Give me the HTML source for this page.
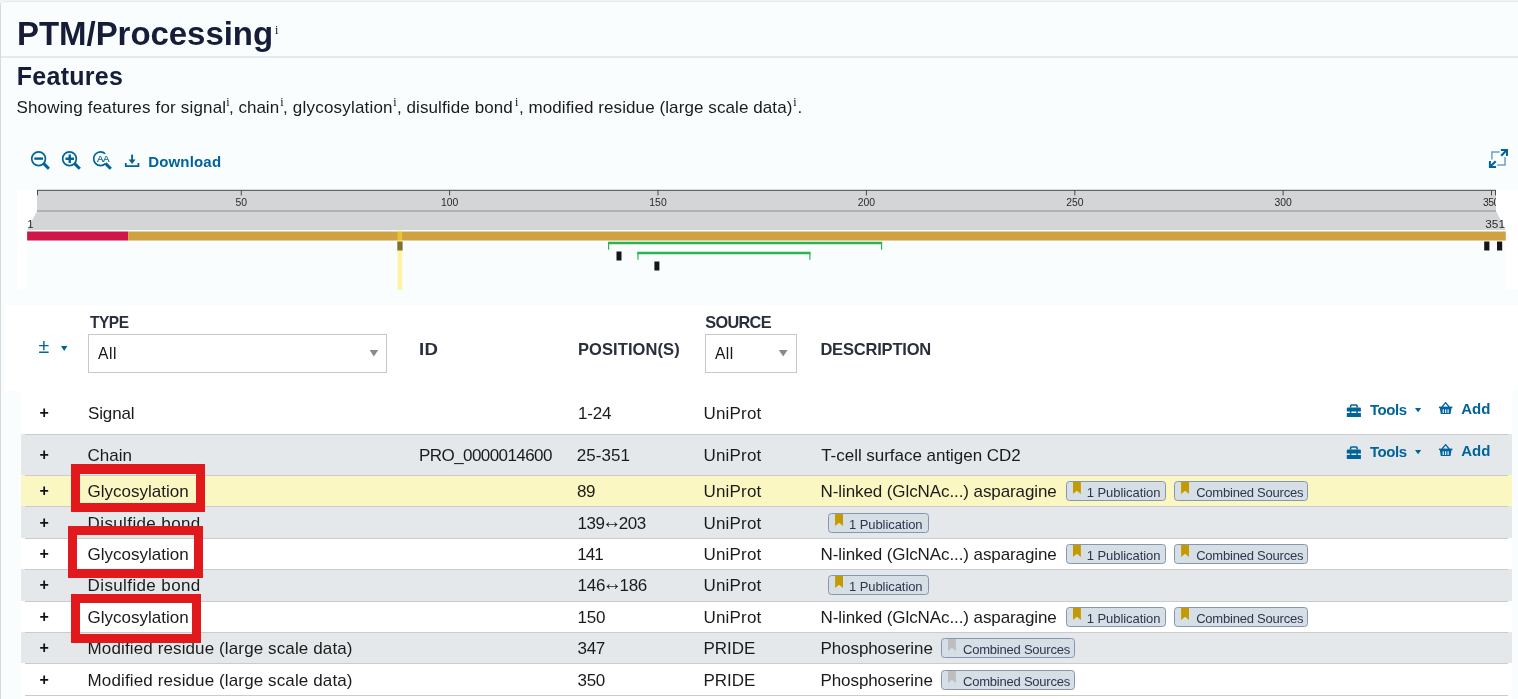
<!DOCTYPE html>
<html lang="en">
<head>
<meta charset="utf-8">
<title>PTM/Processing</title>
<style>
html,body{margin:0;padding:0;}
body{width:1518px;height:699px;overflow:hidden;background:#fafdfe;font-family:"Liberation Sans",sans-serif;color:#1b1b1b;}
#card{will-change:transform;position:absolute;left:0;top:0;width:1518px;height:699px;overflow:hidden;background:#fafdfe;}
#card>*{position:absolute;}
.t{position:absolute;white-space:pre;line-height:1;margin:0;}
.edge-top{left:0;top:0;width:1518px;height:1px;background:#f1f4f6;}
.frame{left:0;top:1px;width:1540px;height:720px;box-sizing:border-box;border-top:1px solid #e8ebee;border-left:1px solid #d6d9de;border-top-left-radius:4px;}
h1.t{font-size:33px;font-weight:700;color:#161d39;}
h2.t{font-size:25px;font-weight:700;color:#161d39;}
.hr{left:1px;top:56px;width:1517px;height:1.5px;background:#e4e9ed;}
.sub{font-size:17px;color:#1b1b1b;}
.sup{font-family:"Liberation Serif",serif;font-size:12px;color:#111;}
.blue{color:#00639a;}
.b{font-weight:700;}
.white{background:#fff;}
.th{font-size:16.5px;font-weight:700;color:#2a2f3c;}
.cell{font-size:17px;color:#1b1b1b;}
.arr{font-size:19.5px;line-height:0;margin:0 -2.6px 0 -2.7px;vertical-align:1px;letter-spacing:0;}
.plus{font-size:16px;font-weight:700;color:#111;}
.row{left:21px;width:1491px;}
.row i{position:absolute;left:4px;right:4px;top:0;height:1px;background:#c9cbce;}
.even{background:#e4e8eb;}
.hl{background:#fbf7c3;}
.sel{border:1px solid #c8c8c8;background:#fff;box-sizing:border-box;}
.tag{position:absolute;box-sizing:border-box;height:19.5px;border:1px solid #8696ae;border-radius:3.5px;background:#d6dee6;}
.tag b{position:absolute;left:5.9px;top:0;width:8px;height:12px;background:#c39b00;clip-path:polygon(0 0,100% 0,100% 100%,50% 72%,0 100%);}
.tag.g b{background:#bdbdbd;}
.tag span{position:absolute;left:21px;top:4.3px;font-size:13px;line-height:1;color:#2e364e;white-space:pre;}
.redbox{position:absolute;box-sizing:border-box;border:9px solid #e2191c;}
</style>
</head>
<body>
<div id="card">
  <div class="edge-top"></div><div class="frame"></div>

  <h1 class="t" style="left:17px;top:17px;letter-spacing:-0.05px;">PTM/Processing</h1>
  <span class="t sup" style="left:274.9px;top:24.2px;">i</span>
  <div class="hr"></div>
  <h2 class="t" style="left:16.8px;top:64px;letter-spacing:0.27px;">Features</h2>

  <p class="t sub" style="left:0;top:99px;width:820px;height:18px;"><span class="t" style="left:16.4px;letter-spacing:0.18px">Showing features for signal</span><span class="t sup" style="left:226.2px;top:-2.6px">i</span><span class="t" style="left:229px;letter-spacing:0px">, chain</span><span class="t sup" style="left:280.2px;top:-2.6px">i</span><span class="t" style="left:283px;letter-spacing:0.2px">, glycosylation</span><span class="t sup" style="left:393.3px;top:-2.6px">i</span><span class="t" style="left:396.9px;letter-spacing:0.1px">, disulfide bond</span><span class="t sup" style="left:515px;top:-2.6px">i</span><span class="t" style="left:518.9px;letter-spacing:0.09px">, modified residue (large scale data)</span><span class="t sup" style="left:793.3px;top:-2.6px">i</span><span class="t" style="left:797.6px">.</span></p>

  <!-- toolbar -->
  <svg style="left:28px;top:148px" width="24" height="24" viewBox="28 148 24 24" fill="none" stroke="#00639a">
    <circle cx="38.6" cy="158.75" r="6.85" stroke-width="1.7"/>
    <path d="M43.5 163.4L48.9 168.8" stroke-width="3"/>
    <path d="M34.3 158.6H43" stroke-width="2.4"/>
  </svg>
  <svg style="left:59px;top:148px" width="24" height="24" viewBox="59 148 24 24" fill="none" stroke="#00639a">
    <circle cx="69.5" cy="158.75" r="6.85" stroke-width="1.7"/>
    <path d="M74.4 163.4L79.8 168.8" stroke-width="3"/>
    <path d="M65.5 158.75H74M69.75 154.5V163" stroke-width="2.4"/>
  </svg>
  <svg style="left:90px;top:148px" width="26" height="24" viewBox="90 148 26 24" fill="none" stroke="#00639a">
    <path d="M105.35 163.6A6.85 6.85 0 1 1 105.2 153.75" stroke-width="1.7"/>
    <path d="M105.4 163.4L110.8 168.8" stroke-width="3"/>
    <text x="97" y="161.8" font-family="Liberation Sans, sans-serif" font-size="9.8" letter-spacing="-0.45" fill="#00639a" stroke="#00639a" stroke-width="0.2">AA</text>
  </svg>
  <svg style="left:123px;top:152px" width="18" height="17" viewBox="123 152 18 17" fill="none" stroke="#00639a">
    <path d="M132.1 154.6V160" stroke-width="1.9"/>
    <path d="M128.6 159.4H135.6L132.1 163.9Z" fill="#00639a" stroke="none"/>
    <path d="M125.8 163.1V166.1H138.4V163.1" stroke-width="1.8"/>
  </svg>
  <span class="t b blue" style="left:148.2px;top:153.6px;font-size:15px;letter-spacing:0.17px;">Download</span>
  <svg style="left:1486px;top:146px" width="26" height="26" viewBox="1486 146 26 26" fill="none">
    <path d="M1499.7 152.1H1491.9V159.6" stroke="#6aa3c7" stroke-width="1.5"/>
    <path d="M1497.2 164.9H1505V156.9" stroke="#6aa3c7" stroke-width="1.5"/>
    <path d="M1500.9 149.9H1507V156" stroke="#00639a" stroke-width="2"/>
    <path d="M1501.2 155.7L1506.6 150.3" stroke="#00639a" stroke-width="2.1"/>
    <path d="M1489.9 161.1V167H1496" stroke="#00639a" stroke-width="2"/>
    <path d="M1495.7 161.2L1490.3 166.6" stroke="#00639a" stroke-width="2.1"/>
  </svg>
  <!-- feature track -->
  <svg style="left:0;top:186px" width="1518" height="108" viewBox="0 186 1518 108" font-family="Liberation Sans, sans-serif">
    <defs><clipPath id="rulerclip"><rect x="30" y="186" width="1466" height="26"/></clipPath></defs>
    <rect x="17" y="189.6" width="1501" height="41.4" fill="#fff"/>
    <rect x="17" y="231" width="10.1" height="58.6" fill="#fff"/>
    <rect x="1505.8" y="231" width="13" height="58.6" fill="#fff"/>
    <rect x="37" y="190" width="1459" height="21" fill="#d4d5d7"/>
    <path d="M37 211H1496L1505.8 230H27.1Z" fill="#d4d5d7"/>
    <rect x="37" y="210.2" width="1459" height="1.6" fill="#a9aaac"/>
    <rect x="37" y="189.8" width="1459" height="1" fill="#4a4a4a"/>
    <g fill="#4a4a4a">
      <rect x="37" y="190" width="1" height="5.4"/>
      <rect x="240.8" y="190" width="1" height="5.4"/>
      <rect x="449.1" y="190" width="1" height="5.4"/>
      <rect x="657.5" y="190" width="1" height="5.4"/>
      <rect x="865.9" y="190" width="1" height="5.4"/>
      <rect x="1074.3" y="190" width="1" height="5.4"/>
      <rect x="1282.6" y="190" width="1" height="5.4"/>
      <rect x="1491" y="190" width="1" height="5.4"/>
      <rect x="1495" y="190" width="1" height="5.4"/>
    </g>
    <g font-size="10.4" fill="#2b2b2b" text-anchor="middle" clip-path="url(#rulerclip)">
      <text x="241.3" y="206.2">50</text>
      <text x="449.6" y="206.2">100</text>
      <text x="658" y="206.2">150</text>
      <text x="866.4" y="206.2">200</text>
      <text x="1074.8" y="206.2">250</text>
      <text x="1283.1" y="206.2">300</text>
      <text x="1482.9" y="206.2" text-anchor="start" letter-spacing="-0.45">350</text>
    </g>
    <text x="27.2" y="227.6" font-size="11.5" fill="#2b2b2b">1</text>
    <text x="1505" y="227.8" font-size="11.8" fill="#2b2b2b" text-anchor="end">351</text>
    <rect x="27.1" y="231.5" width="101" height="9" fill="#d01548"/>
    <rect x="128.1" y="231.5" width="1377.7" height="9" fill="#d0a143"/>
    <g fill="#161616">
      <rect x="397.5" y="241.5" width="4.9" height="9"/>
      <rect x="616.5" y="251.5" width="5" height="9"/>
      <rect x="654.4" y="261.5" width="5" height="9"/>
      <rect x="1484.2" y="241.5" width="5.2" height="9"/>
      <rect x="1497" y="241.5" width="5.2" height="9"/>
    </g>
    <g fill="none" stroke="#2db34f">
      <path d="M608 243H882" stroke-width="2.6"/>
      <path d="M608.6 242V249.8M881.6 242V249.8" stroke-width="1.2"/>
      <path d="M637.4 253H810.4" stroke-width="2.6"/>
      <path d="M638 252V259.8M809.9 252V259.8" stroke-width="1.2"/>
    </g>
    <rect x="397.6" y="230.2" width="4.6" height="59.5" fill="#ffe838" fill-opacity="0.45"/>
  </svg>
  <!-- features table -->
  <div class="white" style="left:4px;top:305.3px;width:1514px;height:86.2px;"></div>
  <div class="white" style="left:21px;top:391px;width:1491px;height:308px;"></div>
  <span class="t blue" style="left:38.4px;top:336.6px;font-size:19.5px;">±</span>
  <svg style="left:60px;top:345px" width="9" height="7" viewBox="60 345 9 7"><path d="M61 346.1H67.4L64.2 351.1Z" fill="#00639a"/></svg>
  <span class="t th" style="left:89.6px;top:314.1px;font-size:16.3px;letter-spacing:-0.5px;transform:scaleX(0.95);transform-origin:0 0;">TYPE</span>
  <div class="sel" style="left:88.2px;top:334px;width:298.4px;height:39px;"></div>
  <span class="t" style="left:98.1px;top:345.5px;font-size:15.6px;letter-spacing:0.55px;color:#151515;">All</span>
  <svg style="left:369px;top:348px" width="10" height="9" viewBox="369 348 10 9"><path d="M369.6 349.9H378.2L373.9 356.4Z" fill="#8a8a8a"/></svg>
  <span class="t th" style="left:418.7px;top:341.2px;letter-spacing:0.25px;transform:scaleX(1.13);transform-origin:0 0;">ID</span>
  <span class="t th" style="left:578px;top:341.2px;letter-spacing:0.08px;">POSITION(S)</span>
  <span class="t th" style="left:705.2px;top:314.3px;font-size:16.3px;letter-spacing:-0.66px;">SOURCE</span>
  <div class="sel" style="left:705px;top:334px;width:91.9px;height:39px;"></div>
  <span class="t" style="left:714.9px;top:345.5px;font-size:15.6px;letter-spacing:0.55px;color:#151515;">All</span>
  <svg style="left:778px;top:348px" width="10" height="9" viewBox="778 348 10 9"><path d="M778.8 349.9H787.6L783.2 356.4Z" fill="#8a8a8a"/></svg>
  <span class="t th" style="left:820.4px;top:341.2px;letter-spacing:-0.19px;">DESCRIPTION</span>
  <div class="row" style="top:391.0px;height:43.0px;"></div>
  <span class="t plus" style="left:39.6px;top:405.4px;">+</span>
  <span class="t cell" style="left:88.0px;top:405.0px;letter-spacing:-0.13px;">Signal</span>
  <span class="t cell" style="left:578.1px;top:405.0px;letter-spacing:-0.2px;">1-24</span>
  <span class="t cell" style="left:703.4px;top:405.0px;letter-spacing:0.21px;">UniProt</span>
  <svg style="left:1345.9px;top:403.8px" width="16" height="14" viewBox="0 0 16 14"><path d="M4.6 3.4V1.9Q4.6 1 5.5 1H10.2Q11.1 1 11.1 1.9V3.4" fill="none" stroke="#00639a" stroke-width="1.6"/><path d="M1.8 3.4H13.9Q14.9 3.4 14.9 4.4V7.5H0.8V4.4Q0.8 3.4 1.8 3.4ZM0.8 8.9H14.9V12.9H0.8Z" fill="#00639a"/><path d="M4.6 6.9V9.6M11.1 6.9V9.6" stroke="#00639a" stroke-width="1.5"/></svg>
  <span class="t b blue" style="left:1370px;top:401.9px;font-size:15px;letter-spacing:-0.43px;">Tools</span>
  <svg style="left:1414px;top:407.0px" width="8" height="6" viewBox="0 0 8 6"><path d="M1 1.1H7.2L4.1 5.3Z" fill="#00639a"/></svg>
  <svg style="left:1438.4px;top:401.6px" width="16" height="13" viewBox="0 0 16 13"><path d="M4 5L7.6 0.7L11.2 5" fill="none" stroke="#00639a" stroke-width="1.3"/><path d="M0.9 4.6H14.4V6.1H0.9Z" fill="#00639a"/><path d="M1.8 6H13.5L12.5 12H2.8Z" fill="#00639a"/><path d="M5.2 7.2V10.9M7.65 7.2V10.9M10.1 7.2V10.9" stroke="#fff" stroke-width="1.1"/></svg>
  <span class="t b blue" style="left:1461.2px;top:400.9px;font-size:15px;letter-spacing:0px;">Add</span>
  <div class="row even" style="top:434.0px;height:41.0px;"><i></i></div>
  <span class="t plus" style="left:39.6px;top:447.4px;">+</span>
  <span class="t cell" style="left:87.5px;top:447.0px;letter-spacing:0px;">Chain</span>
  <span class="t cell" style="left:419.0px;top:447.0px;letter-spacing:-0.57px;">PRO_0000014600</span>
  <span class="t cell" style="left:576.7px;top:447.0px;letter-spacing:0.05px;">25-351</span>
  <span class="t cell" style="left:703.4px;top:447.0px;letter-spacing:0.21px;">UniProt</span>
  <span class="t cell" style="left:821.2px;top:447.0px;letter-spacing:-0.03px;">T-cell surface antigen CD2</span>
  <svg style="left:1345.9px;top:445.8px" width="16" height="14" viewBox="0 0 16 14"><path d="M4.6 3.4V1.9Q4.6 1 5.5 1H10.2Q11.1 1 11.1 1.9V3.4" fill="none" stroke="#00639a" stroke-width="1.6"/><path d="M1.8 3.4H13.9Q14.9 3.4 14.9 4.4V7.5H0.8V4.4Q0.8 3.4 1.8 3.4ZM0.8 8.9H14.9V12.9H0.8Z" fill="#00639a"/><path d="M4.6 6.9V9.6M11.1 6.9V9.6" stroke="#00639a" stroke-width="1.5"/></svg>
  <span class="t b blue" style="left:1370px;top:443.9px;font-size:15px;letter-spacing:-0.43px;">Tools</span>
  <svg style="left:1414px;top:449.0px" width="8" height="6" viewBox="0 0 8 6"><path d="M1 1.1H7.2L4.1 5.3Z" fill="#00639a"/></svg>
  <svg style="left:1438.4px;top:443.6px" width="16" height="13" viewBox="0 0 16 13"><path d="M4 5L7.6 0.7L11.2 5" fill="none" stroke="#00639a" stroke-width="1.3"/><path d="M0.9 4.6H14.4V6.1H0.9Z" fill="#00639a"/><path d="M1.8 6H13.5L12.5 12H2.8Z" fill="#00639a"/><path d="M5.2 7.2V10.9M7.65 7.2V10.9M10.1 7.2V10.9" stroke="#fff" stroke-width="1.1"/></svg>
  <span class="t b blue" style="left:1461.2px;top:442.9px;font-size:15px;letter-spacing:0px;">Add</span>
  <div class="row hl" style="top:475.0px;height:31.0px;"><i></i></div>
  <span class="t plus" style="left:39.6px;top:483.4px;">+</span>
  <span class="t cell" style="left:87.6px;top:483.0px;letter-spacing:0px;">Glycosylation</span>
  <span class="t cell" style="left:577.0px;top:483.0px;letter-spacing:-0.35px;">89</span>
  <span class="t cell" style="left:703.4px;top:483.0px;letter-spacing:0.21px;">UniProt</span>
  <span class="t cell" style="left:820.5px;top:483.0px;letter-spacing:-0.09px;">N-linked (GlcNAc...) asparagine</span>
  <div class="tag" style="left:1066px;top:481px;width:99.6px;"><b></b><span style="left:19.8px;top:4px;letter-spacing:-0.07px">1 Publication</span></div>
  <div class="tag" style="left:1174.2px;top:481px;width:133.4px;"><b></b><span style="left:21px;top:4px;letter-spacing:-0.22px">Combined Sources</span></div>
  <div class="row even" style="top:506.0px;height:32.0px;"><i></i></div>
  <span class="t plus" style="left:39.6px;top:515.4px;">+</span>
  <span class="t cell" style="left:87.6px;top:515.0px;letter-spacing:0.38px;">Disulfide bond</span>
  <span class="t cell" style="left:577.6px;top:515.0px;letter-spacing:-0.45px;">139<span class="arr">↔</span>203</span>
  <span class="t cell" style="left:703.4px;top:515.0px;letter-spacing:0.21px;">UniProt</span>
  <div class="tag" style="left:828.2px;top:513px;width:100.4px;"><b></b><span style="left:19.8px;top:4px;letter-spacing:-0.07px">1 Publication</span></div>
  <div class="row" style="top:538.0px;height:31.0px;"><i></i></div>
  <span class="t plus" style="left:39.6px;top:546.4px;">+</span>
  <span class="t cell" style="left:87.6px;top:546.0px;letter-spacing:0px;">Glycosylation</span>
  <span class="t cell" style="left:577.2px;top:546.0px;letter-spacing:-0.9px;">141</span>
  <span class="t cell" style="left:703.4px;top:546.0px;letter-spacing:0.21px;">UniProt</span>
  <span class="t cell" style="left:820.5px;top:546.0px;letter-spacing:-0.09px;">N-linked (GlcNAc...) asparagine</span>
  <div class="tag" style="left:1066px;top:544px;width:99.6px;"><b></b><span style="left:19.8px;top:4px;letter-spacing:-0.07px">1 Publication</span></div>
  <div class="tag" style="left:1174.2px;top:544px;width:133.4px;"><b></b><span style="left:21px;top:4px;letter-spacing:-0.22px">Combined Sources</span></div>
  <div class="row even" style="top:569.0px;height:32.0px;"><i></i></div>
  <span class="t plus" style="left:39.6px;top:577.4px;">+</span>
  <span class="t cell" style="left:87.6px;top:577.0px;letter-spacing:0.38px;">Disulfide bond</span>
  <span class="t cell" style="left:577.6px;top:577.0px;letter-spacing:-0.25px;">146<span class="arr">↔</span>186</span>
  <span class="t cell" style="left:703.4px;top:577.0px;letter-spacing:0.21px;">UniProt</span>
  <div class="tag" style="left:828.2px;top:575px;width:100.4px;"><b></b><span style="left:19.8px;top:4px;letter-spacing:-0.07px">1 Publication</span></div>
  <div class="row" style="top:601.0px;height:31.0px;"><i></i></div>
  <span class="t plus" style="left:39.6px;top:609.4px;">+</span>
  <span class="t cell" style="left:87.6px;top:609.0px;letter-spacing:0px;">Glycosylation</span>
  <span class="t cell" style="left:577.6px;top:609.0px;letter-spacing:-0.3px;">150</span>
  <span class="t cell" style="left:703.4px;top:609.0px;letter-spacing:0.21px;">UniProt</span>
  <span class="t cell" style="left:820.5px;top:609.0px;letter-spacing:-0.09px;">N-linked (GlcNAc...) asparagine</span>
  <div class="tag" style="left:1066px;top:607px;width:99.6px;"><b></b><span style="left:19.8px;top:4px;letter-spacing:-0.07px">1 Publication</span></div>
  <div class="tag" style="left:1174.2px;top:607px;width:133.4px;"><b></b><span style="left:21px;top:4px;letter-spacing:-0.22px">Combined Sources</span></div>
  <div class="row even" style="top:632.0px;height:31.0px;"><i></i></div>
  <span class="t plus" style="left:39.6px;top:640.4px;">+</span>
  <span class="t cell" style="left:87.6px;top:640.0px;letter-spacing:0.12px;">Modified residue (large scale data)</span>
  <span class="t cell" style="left:577.5px;top:640.0px;letter-spacing:-0.3px;">347</span>
  <span class="t cell" style="left:703.4px;top:640.0px;letter-spacing:0px;">PRIDE</span>
  <span class="t cell" style="left:820.5px;top:640.0px;letter-spacing:-0.09px;">Phosphoserine</span>
  <div class="tag g" style="left:941px;top:638px;width:133.8px;"><b></b><span style="left:21px;top:4px;letter-spacing:-0.22px">Combined Sources</span></div>
  <div class="row" style="top:663.0px;height:32.0px;"><i></i></div>
  <span class="t plus" style="left:39.6px;top:672.4px;">+</span>
  <span class="t cell" style="left:87.6px;top:672.0px;letter-spacing:0.12px;">Modified residue (large scale data)</span>
  <span class="t cell" style="left:577.5px;top:672.0px;letter-spacing:-0.3px;">350</span>
  <span class="t cell" style="left:703.4px;top:672.0px;letter-spacing:0px;">PRIDE</span>
  <span class="t cell" style="left:820.5px;top:672.0px;letter-spacing:-0.09px;">Phosphoserine</span>
  <div class="tag g" style="left:941px;top:670px;width:133.8px;"><b></b><span style="left:21px;top:4px;letter-spacing:-0.22px">Combined Sources</span></div>
  <div class="row" style="top:695px;height:4px;"><i></i></div>
  <div class="redbox" style="left:71.1px;top:464px;width:133.6px;height:48px;border-top-width:10px;"></div>
  <div class="redbox" style="left:68.2px;top:526.1px;width:135.2px;height:52.3px;"></div>
  <div class="redbox" style="left:71.2px;top:594px;width:130.3px;height:48.9px;"></div>
</div>
</body>
</html>
